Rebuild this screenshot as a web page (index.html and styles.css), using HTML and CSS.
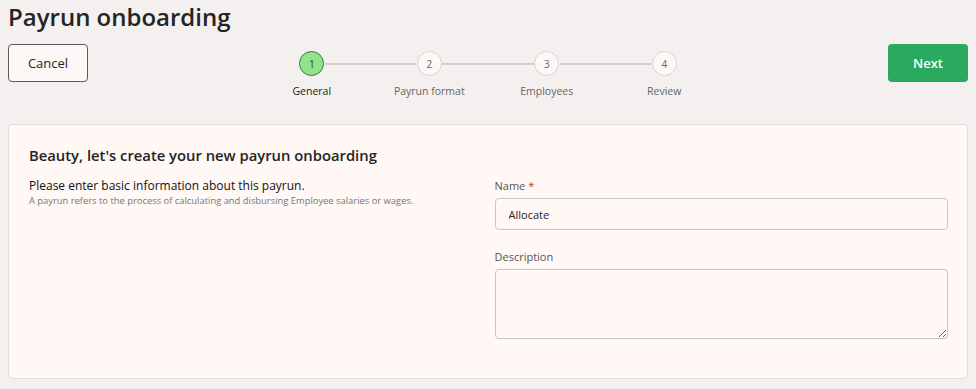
FILE: index.html
```html
<!DOCTYPE html>
<html lang="en">
<head>
  <meta charset="UTF-8">
  <meta name="viewport" content="width=device-width, initial-scale=1.0">
  <title>Payrun onboarding</title>
  <link rel="stylesheet" href="styles.css">
</head>
<body>
  <h1 class="page-title">Payrun onboarding</h1>

  <div class="header-row">
    <button class="btn btn-cancel">Cancel</button>

    <ol class="stepper">
      <li class="step active">
        <span class="step-circle">1</span>
        <span class="step-label">General</span>
      </li>
      <li class="step">
        <span class="step-circle">2</span>
        <span class="step-label">Payrun format</span>
      </li>
      <li class="step">
        <span class="step-circle">3</span>
        <span class="step-label">Employees</span>
      </li>
      <li class="step">
        <span class="step-circle">4</span>
        <span class="step-label">Review</span>
      </li>
    </ol>

    <button class="btn btn-next">Next</button>
  </div>

  <div class="card">
    <h2 class="card-title">Beauty, let's create your new payrun onboarding</h2>
    <div class="card-grid">
      <div class="intro">
        <p class="intro-lead">Please enter basic information about this payrun.</p>
        <p class="intro-sub">A payrun refers to the process of calculating and disbursing Employee salaries or wages.</p>
      </div>
      <div class="fields">
        <div class="field">
          <label class="field-label" for="name">Name <span class="required">*</span></label>
          <input type="text" id="name" class="field-input" value="Allocate">
        </div>
        <div class="field">
          <label class="field-label" for="description">Description</label>
          <textarea id="description" class="field-textarea"></textarea>
        </div>
      </div>
    </div>
  </div>
</body>
</html>
```

FILE: styles.css
```css
body {
  font-family: "Open Sans", "Noto Sans", sans-serif;
  background-color: #f3f0ef;
  color: #242424;
  margin: 0;
  padding: 0 8px;
}
.page-title {
  font-size: 24px;
  font-weight: 600;
  line-height: 34px;
  margin: 0;
  color: #242424;
}
.header-row {
  display: flex;
  justify-content: space-between;
  align-items: flex-start;
  margin-top: 10px;
}
.btn {
  width: 80px;
  height: 38px;
  border-radius: 4px;
  font-family: inherit;
  font-size: 13px;
  cursor: pointer;
}
.btn-cancel {
  background-color: #fdf7f5;
  border: 1px solid #5a5a5a;
  color: #242424;
}
.btn-next {
  background-color: #2aaa5f;
  border: none;
  color: #ffffff;
  font-weight: 600;
}
.stepper {
  list-style: none;
  margin: 0;
  padding: 7px 0 0;
  display: grid;
  grid-template-columns: repeat(4, 117.5px);
}
.step {
  position: relative;
  display: flex;
  flex-direction: column;
  align-items: center;
}
.step:not(:last-child)::after {
  content: "";
  position: absolute;
  top: 11.5px;
  left: calc(50% + 13px);
  width: calc(100% - 26px);
  height: 2px;
  background-color: #d2cfce;
}
.step-circle {
  width: 23px;
  height: 23px;
  border-radius: 50%;
  border: 1px solid #d8d4d3;
  background-color: #fdf8f6;
  color: #666;
  font-size: 10px;
  display: flex;
  align-items: center;
  justify-content: center;
}
.step.active .step-circle {
  background-color: #90e38a;
  border-color: #3d7a3d;
  color: #333;
}
.step-label {
  margin-top: 8px;
  font-size: 10.5px;
  line-height: 14px;
  color: #666;
  white-space: nowrap;
}
.step.active .step-label {
  color: #242424;
}
.card {
  margin-top: 26px;
  background-color: #fff8f5;
  border: 1px solid #e0dcda;
  border-radius: 4px;
  padding: 20px 19px 39px 20px;
}
.card-title {
  font-size: 14.8px;
  font-weight: 600;
  line-height: 20px;
  margin: 0 0 13px;
  color: #242424;
}
.card-grid {
  display: grid;
  grid-template-columns: 1fr 1fr;
  gap: 12px;
}
.intro-lead {
  font-size: 12px;
  line-height: 15px;
  margin: 0;
  color: #111;
}
.intro-sub {
  font-size: 9.4px;
  line-height: 13px;
  margin: 1px 0 0;
  color: #777;
}
.field {
  display: flex;
  flex-direction: column;
}
.field + .field {
  margin-top: 19px;
}
.field-label {
  font-size: 11px;
  line-height: 16px;
  color: #555;
  margin-bottom: 4px;
}
.required {
  color: #d13438;
}
.field-input,
.field-textarea {
  box-sizing: border-box;
  width: 100%;
  border: 1px solid #c8c6c4;
  border-radius: 4px;
  background-color: #fff8f5;
  font-family: inherit;
  font-size: 11px;
  color: #242424;
}
.field-input {
  height: 32px;
  padding: 0 13px;
}
.field-textarea {
  height: 70px;
  padding: 6px 13px;
  resize: vertical;
}
```
